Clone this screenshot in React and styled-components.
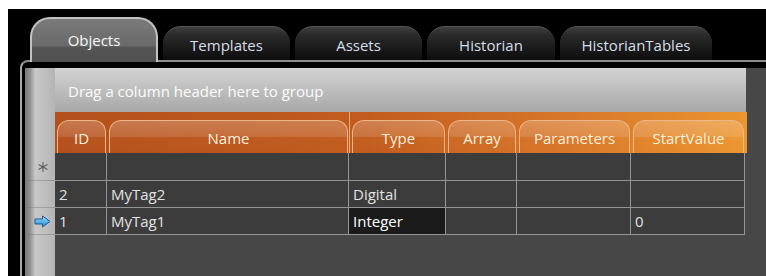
import React from 'react'
import styled, { createGlobalStyle } from 'styled-components'

const GlobalStyle = createGlobalStyle`
  html, body {
    margin: 0;
    padding: 0;
    background: #fff;
  }
  body {
    font-family: "Open Sans", "Noto Sans", sans-serif;
    font-size: 15px;
  }
`

const Page = styled.div`
    height: 276px;
    box-sizing: border-box;
    padding: 9px 0 0 8px;
    overflow: hidden;
`

const Window = styled.div`
    height: 267px;
    background: #000;
    display: flex;
    flex-direction: column;
`

const TabStrip = styled.div`
    flex: none;
    height: 51px;
    box-sizing: border-box;
    padding-left: 22px;
    display: flex;
    align-items: flex-end;
    gap: 5px;
    position: relative;
    z-index: 2;
`

const Tab = styled.div`
    flex: none;
    width: ${p => p.$width}px;
    height: 34px;
    box-sizing: border-box;
    padding-top: 3px;
    border-radius: 18px 18px 0 0;
    border-top: 1px solid #555;
    background: linear-gradient(#3e3e3e 0%, #2a2a2a 25%, #181818 70%, #0e0e0e 100%);
    color: #d6dee8;
    display: flex;
    align-items: center;
    justify-content: center;
    white-space: nowrap;
`

const ActiveTab = styled(Tab)`
    height: 45px;
    margin-bottom: -2px;
    padding-top: 0;
    padding-bottom: 2px;
    border: 2px solid #c2c2c2;
    border-bottom: none;
    border-radius: 20px 20px 0 0;
    background: linear-gradient(#7a7a7a 0%, #6a6a6a 62%, #555 66%, #505050 100%);
    color: #f8f8f8;
`

const Panel = styled.div`
    flex: 1;
    min-height: 0;
    margin-left: 12px;
    border-top: 2px solid #8c8c8c;
    border-left: 2px solid #a8a8a8;
    border-top-left-radius: 8px;
    padding: 6px 0 0 3px;
    display: flex;
    overflow: hidden;
`

const RowHeaders = styled.div`
    flex: none;
    width: 30px;
    display: flex;
    flex-direction: column;
    background: linear-gradient(to right, #7a7a7a 0%, #8e8e8e 16%, #c8c8c8 34%, #bebebe 70%, #b4b4b4 100%);
`

const HeaderSpacer = styled.div`
    flex: none;
    height: 85px;
`

const Indicator = styled.div`
    flex: none;
    height: ${p => p.$h}px;
    box-sizing: border-box;
    border-bottom: 1px solid rgba(120, 120, 120, 0.45);
    display: flex;
    align-items: center;
    justify-content: center;
    padding-left: 5px;
`

const GridArea = styled.div`
    flex: 1;
    background: #474747;
    display: flex;
    flex-direction: column;
`

const GroupPanel = styled.div`
    flex: none;
    width: 691px;
    height: 44px;
    box-sizing: border-box;
    padding: 2px 0 0 13px;
    display: flex;
    align-items: center;
    background: linear-gradient(#d3d3d3, #a8a8a8);
    color: #fbfbfb;
`

const COLS = '52px 242px 97px 71px 114px 114px'

const HeaderBand = styled.div`
    flex: none;
    width: 692px;
    height: 41px;
    display: grid;
    grid-template-columns: ${COLS};
    background: linear-gradient(to right, #b4501c 0%, #c25c1e 45%, #d9782a 75%, #eb962f 100%);
`

const HeaderSlot = styled.div`
    display: flex;
    align-items: flex-end;
    box-sizing: border-box;
    padding: 0 1px 0 2px;
    border-left: ${p => (p.$divider ? '1px solid rgba(250, 200, 160, 0.75)' : 'none')};
`

const HeaderCell = styled.div`
    flex: 1;
    height: 33px;
    box-sizing: border-box;
    border: 1px solid #f0b485;
    border-bottom: none;
    border-radius: 12px 12px 0 0;
    background: linear-gradient(
        rgba(255, 255, 255, 0.22) 0%,
        rgba(255, 255, 255, 0.14) 48%,
        rgba(255, 255, 255, 0.02) 52%,
        rgba(255, 255, 255, 0) 100%
    );
    color: #fff0de;
    display: flex;
    align-items: center;
    justify-content: center;
    padding-top: 1px;
    white-space: nowrap;
`

const Row = styled.div`
    flex: none;
    width: 690px;
    height: ${p => p.$h}px;
    display: grid;
    grid-template-columns: ${COLS};
`

const Cell = styled.div`
    box-sizing: border-box;
    border-right: 1px solid #959595;
    border-bottom: 1px solid #959595;
    padding-left: 4px;
    display: flex;
    align-items: center;
    background: ${p => (p.$current ? '#1b1b1b' : '#3c3c3c')};
    color: ${p => (p.$current ? '#ffffff' : '#e2e2e2')};
    white-space: nowrap;
`

function NewRowMark() {
    return (
        <svg width="10" height="10" viewBox="0 0 10 10">
            <g stroke="#5e5e5e" strokeWidth="1.1" strokeLinecap="round">
                <line x1="5" y1="0.5" x2="5" y2="9.5"/>
                <line x1="1" y1="2.7" x2="9" y2="7.3"/>
                <line x1="1" y1="7.3" x2="9" y2="2.7"/>
            </g>
        </svg>
    )
}

function CurrentRowArrow() {
    return (
        <svg width="17" height="13" viewBox="0 0 17 13">
            <defs>
                <linearGradient id="arrowFill" x1="0" y1="0" x2="0" y2="1">
                    <stop offset="0" stopColor="#a8def8"/>
                    <stop offset="0.5" stopColor="#5cb4ea"/>
                    <stop offset="1" stopColor="#2d82c6"/>
                </linearGradient>
            </defs>
            <path
                d="M1 4 H8.5 V1 L16 6.5 L8.5 12 V9 H1 Z"
                fill="url(#arrowFill)"
                stroke="#1f5d98"
                strokeWidth="1"
                strokeLinejoin="round"
            />
        </svg>
    )
}

const tabs = [
    { label: 'Templates', width: 127 },
    { label: 'Assets', width: 127 },
    { label: 'Historian', width: 128 },
    { label: 'HistorianTables', width: 152 }
]

const columns = ['ID', 'Name', 'Type', 'Array', 'Parameters', 'StartValue']

const rows = [
    { h: 28, mark: 'new', values: ['', '', '', '', '', ''] },
    { h: 27, values: ['2', 'MyTag2', 'Digital', '', '', ''] },
    { h: 27, mark: 'current', currentCol: 2, values: ['1', 'MyTag1', 'Integer', '', '', '0'] }
]

export default function App() {
    return (
        <Page>
            <GlobalStyle/>
            <Window>
                <TabStrip>
                    <ActiveTab $width={128}>Objects</ActiveTab>
                    {tabs.map(t => <Tab key={t.label} $width={t.width}>{t.label}</Tab>)}
                </TabStrip>
                <Panel>
                    <RowHeaders>
                        <HeaderSpacer/>
                        {rows.map((r, i) => (
                            <Indicator key={i} $h={r.h}>
                                {r.mark === 'new' && <NewRowMark/>}
                                {r.mark === 'current' && <CurrentRowArrow/>}
                            </Indicator>
                        ))}
                    </RowHeaders>
                    <GridArea>
                        <GroupPanel>Drag a column header here to group</GroupPanel>
                        <HeaderBand>
                            {columns.map(c => (
                                <HeaderSlot key={c} $divider={c === 'Type'}>
                                    <HeaderCell>{c}</HeaderCell>
                                </HeaderSlot>
                            ))}
                        </HeaderBand>
                        {rows.map((r, i) => (
                            <Row key={i} $h={r.h}>
                                {r.values.map((v, j) => (
                                    <Cell key={j} $current={r.currentCol === j}>{v}</Cell>
                                ))}
                            </Row>
                        ))}
                    </GridArea>
                </Panel>
            </Window>
        </Page>
    )
}
